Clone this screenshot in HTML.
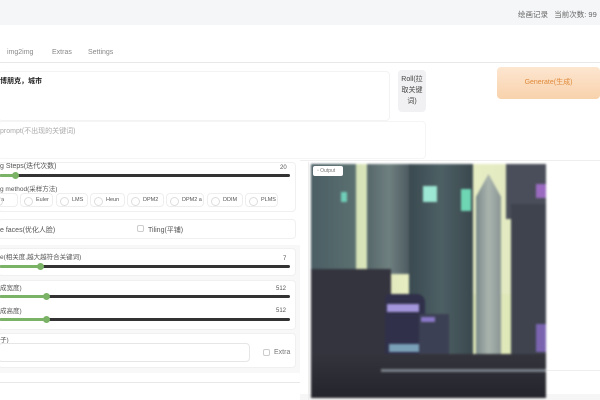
<!DOCTYPE html>
<html><head><meta charset="utf-8"><style>
*{margin:0;padding:0;box-sizing:border-box}
body{width:600px;height:400px;overflow:hidden;background:#fff;font-family:"Liberation Sans","Noto Sans CJK SC",sans-serif;color:#444;position:relative}
.a{position:absolute}
.t{font-size:7px;color:#555;white-space:nowrap}
.track{position:absolute;height:3px;background:#333;border-radius:2px}
.fill{position:absolute;height:3px;background:#7ab366;border-radius:2px}
.thumb{position:absolute;width:7px;height:7px;border-radius:50%;background:#7ab366}
.radio{position:absolute;top:193px;height:14px;border:1px solid #eee;border-radius:4px;font-size:5.5px;color:#555;padding:3px 0 0 15px;white-space:nowrap}
.radio:before{content:"";position:absolute;left:3px;top:3px;width:7px;height:7px;border:1px solid #ddd;border-radius:50%}
.box{position:absolute;border:1px solid #f0f0f0;border-radius:4px;background:#fff}
</style></head><body>
<div class="a" style="left:0;top:0;width:600px;height:25px;background:#f5f6f8"></div>
<div class="a t" style="left:518px;top:9px;font-size:7.5px;color:#666">绘画记录&nbsp;&nbsp;&nbsp;当前次数: 99</div>
<div class="a t" style="left:7px;top:49px;color:#888">img2img</div>
<div class="a t" style="left:52px;top:49px;color:#888">Extras</div>
<div class="a t" style="left:88px;top:49px;color:#888">Settings</div>
<div class="a" style="left:0;top:62px;width:600px;height:1px;background:#e8e8e8"></div>
<div class="box" style="left:-2px;top:71px;width:392px;height:50px;border-color:#f3f3f3"></div>
<div class="a t" style="left:0;top:76px;font-weight:bold;color:#222">博朋克，城市</div>
<div class="a" style="left:398px;top:70px;width:28px;height:42px;background:#f1f1f3;border-radius:4px;font-size:7px;color:#444;text-align:center;line-height:11px;padding-top:4px">Roll(拉取关键词)</div>
<div class="a" style="left:497px;top:67px;width:103px;height:32px;border-radius:4px;background:linear-gradient(#fde6d0,#f8d2ac);font-size:7px;color:#e08a3a;text-align:center;line-height:32px">Generate(生成)</div>
<div class="box" style="left:-2px;top:121px;width:428px;height:38px;border-color:#f5f5f5"></div>
<div class="a t" style="left:0;top:126px;color:#aaa">prompt(不出现的关键词)</div>
<div class="a" style="left:300px;top:160px;width:300px;height:1px;background:#eee"></div>
<div class="box" style="left:-2px;top:162px;width:298px;height:50px"></div>
<div class="a t" style="left:0;top:161px">g Steps(迭代次数)</div>
<div class="a t" style="left:280px;top:165px;font-size:6px">20</div>
<div class="track" style="left:0;top:174px;width:290px"></div>
<div class="fill" style="left:0;top:174px;width:15px"></div>
<div class="thumb" style="left:12px;top:172px"></div>
<div class="a t" style="left:0;top:183px;font-size:6.5px">g method(采样方法)</div>
<div class="radio" style="left:-10px;width:28px;padding-left:10px">a</div>
<div class="radio" style="left:20px;width:33px">Euler</div>
<div class="radio" style="left:56px;width:32px">LMS</div>
<div class="radio" style="left:90px;width:35px">Heun</div>
<div class="radio" style="left:127px;width:37px">DPM2</div>
<div class="radio" style="left:166px;width:38px">DPM2 a</div>
<div class="radio" style="left:207px;width:36px">DDIM</div>
<div class="radio" style="left:245px;width:33px">PLMS</div>
<div class="box" style="left:-2px;top:219px;width:298px;height:20px"></div>
<div class="a t" style="left:0;top:225px">e faces(优化人脸)</div>
<div class="a" style="left:137px;top:225px;width:7px;height:7px;border:1px solid #ccc;border-radius:2px"></div>
<div class="a t" style="left:148px;top:225px">Tiling(平铺)</div>
<div class="a" style="left:0;top:245px;width:300px;height:128px;background:#f8f8f9"></div>
<div class="box" style="left:-2px;top:248px;width:298px;height:28px"></div>
<div class="a t" style="left:0;top:251px;font-size:6.5px">e(相关度,越大越符合关键词)</div>
<div class="a t" style="left:283px;top:256px;font-size:6px">7</div>
<div class="track" style="left:0;top:265px;width:290px"></div>
<div class="fill" style="left:0;top:265px;width:40px"></div>
<div class="thumb" style="left:37px;top:263px"></div>
<div class="box" style="left:-2px;top:280px;width:298px;height:50px"></div>
<div class="a t" style="left:0;top:282px;font-size:6.5px">成宽度)</div>
<div class="a t" style="left:276px;top:286px;font-size:6px">512</div>
<div class="track" style="left:0;top:295px;width:290px"></div>
<div class="fill" style="left:0;top:295px;width:46px"></div>
<div class="thumb" style="left:43px;top:293px"></div>
<div class="a t" style="left:0;top:305px;font-size:6.5px">成高度)</div>
<div class="a t" style="left:276px;top:308px;font-size:6px">512</div>
<div class="track" style="left:0;top:318px;width:290px"></div>
<div class="fill" style="left:0;top:318px;width:46px"></div>
<div class="thumb" style="left:43px;top:316px"></div>
<div class="box" style="left:-2px;top:333px;width:298px;height:35px"></div>
<div class="a t" style="left:0;top:334px;font-size:6.5px">子)</div>
<div class="box" style="left:-2px;top:343px;width:252px;height:19px;border-color:#e6e6e6"></div>
<div class="a" style="left:263px;top:349px;width:7px;height:7px;border:1px solid #ccc;border-radius:2px"></div>
<div class="a t" style="left:274px;top:349px;color:#777">Extra</div>
<div class="a" style="left:0;top:382px;width:300px;height:1px;background:#e8e8e8"></div>
<div class="a" style="left:540px;top:370px;width:60px;height:1px;background:#eee"></div>
<div class="a" style="left:300px;top:394px;width:300px;height:6px;background:#f6f6f6"></div>
<div class="a" style="left:311px;top:164px;width:235px;height:234px;overflow:hidden;background:#dfe8b8;filter:blur(1px)">
 <div class="a" style="left:0;top:0;width:235px;height:130px;background:linear-gradient(90deg,#c8d8b0,#eef2c4 50%,#dde6c0)"></div>
 <div class="a" style="left:0;top:0;width:45px;height:110px;background:linear-gradient(90deg,#4a5e64,#5b7070)"></div>
 <div class="a" style="left:30px;top:28px;width:6px;height:10px;background:#6fcfb8"></div>
 <div class="a" style="left:56px;top:0;width:44px;height:110px;background:linear-gradient(90deg,#56676a,#6f8080,#4a585e)"></div>
 <div class="a" style="left:98px;top:0;width:64px;height:200px;background:linear-gradient(90deg,#3a4a50,#4d6064,#3a484e)"></div>
 <div class="a" style="left:112px;top:22px;width:14px;height:16px;background:#9ce8d4"></div>
 <div class="a" style="left:150px;top:25px;width:10px;height:22px;background:#6fd6b4"></div>
 <div class="a" style="left:165px;top:10px;width:25px;height:190px;background:linear-gradient(90deg,#7a8a8a,#aab4ae,#8a9694);clip-path:polygon(50% 0,100% 12%,100% 100%,0 100%,0 12%)"></div>
 <div class="a" style="left:195px;top:0;width:40px;height:55px;background:#4a4e5a"></div>
 <div class="a" style="left:200px;top:40px;width:35px;height:150px;background:#3e434e"></div>
 <div class="a" style="left:225px;top:20px;width:10px;height:14px;background:#9a6ac0"></div>
 <div class="a" style="left:225px;top:160px;width:10px;height:28px;background:#7a64b0"></div>
 <div class="a" style="left:0;top:105px;width:80px;height:129px;background:#34343e"></div>
 <div class="a" style="left:74px;top:130px;width:40px;height:70px;background:#30304a;border-radius:4px 8px 0 0"></div>
 <div class="a" style="left:76px;top:140px;width:32px;height:8px;background:#a496dc"></div>
 <div class="a" style="left:78px;top:180px;width:30px;height:8px;background:#7aa0b8"></div>
 <div class="a" style="left:108px;top:150px;width:30px;height:40px;background:#3c4054"></div>
 <div class="a" style="left:110px;top:153px;width:14px;height:5px;background:#8a78c8"></div>
 <div class="a" style="left:0;top:190px;width:235px;height:44px;background:linear-gradient(#34343c,#24242c)"></div>
 <div class="a" style="left:70px;top:205px;width:165px;height:3px;background:#7a8088"></div>
</div>
<div class="a" style="left:313px;top:166px;width:30px;height:10px;background:#fff;border-radius:2px;font-size:5px;color:#777;padding:2px 0 0 4px">▫ Output</div>
<div class="a" style="left:308px;top:162px;width:1px;height:238px;background:#eee"></div>
</body></html>
